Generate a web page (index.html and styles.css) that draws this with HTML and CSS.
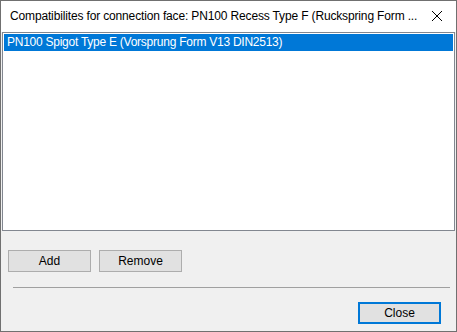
FILE: index.html
```html
<!DOCTYPE html>
<html lang="en">

<head>
  <meta charset="UTF-8" />
  <title>Compatibilites</title>
  <link rel="stylesheet" href="styles.css">
</head>

<body>
  <div class="window">
    <div class="titlebar">
      <span class="title">Compatibilites for connection face: PN100 Recess Type F (Ruckspring Form ...</span>
      <svg class="close-x" width="12" height="12" viewBox="0 0 12 12">
        <path d="M1 1 L11 11 M11 1 L1 11" stroke="#000" stroke-width="1" fill="none" />
      </svg>
    </div>

    <div class="content">
      <div class="listbox">
        <div class="list-item selected">PN100 Spigot Type E (Vorsprung Form V13 DIN2513)</div>
      </div>

      <div class="button-row">
        <button class="btn">Add</button>
        <button class="btn">Remove</button>
      </div>

      <div class="separator"></div>

      <div class="footer">
        <button class="btn default">Close</button>
      </div>
    </div>
  </div>
</body>

</html>
```

FILE: styles.css
```css
body {
  margin: 0;
  font-family: 'Liberation Sans', Arial, sans-serif;
  font-size: 12px;
  color: #000;
  background: #f0f0f0;
}

.window {
  width: 457px;
  height: 332px;
  box-sizing: border-box;
  border: 1px solid #707070;
  background: #f0f0f0;
  display: flex;
  flex-direction: column;
}

.titlebar {
  height: 31px;
  background: #fff;
  display: flex;
  align-items: center;
  padding-left: 9px;
  padding-right: 13px;
}

.title {
  flex: 1;
  white-space: nowrap;
  overflow: hidden;
  letter-spacing: -0.15px;
  padding-bottom: 1px;
}

.close-x {
  display: block;
  margin-bottom: 1px;
}

.content {
  flex: 1;
  padding: 0 1px;
}

.listbox {
  height: 199px;
  box-sizing: border-box;
  border: 1px solid #828790;
  background: #fff;
  padding: 1px;
}

.list-item {
  height: 17px;
  line-height: 16px;
  padding-left: 3px;
  white-space: nowrap;
  letter-spacing: -0.25px;
}

.list-item.selected {
  background: #0078d7;
  color: #fff;
}

.button-row {
  display: flex;
  gap: 8px;
  margin-top: 19px;
  padding-left: 6px;
}

.btn {
  width: 83px;
  height: 22px;
  box-sizing: border-box;
  border: 1px solid #adadad;
  background: #e1e1e1;
  font-family: inherit;
  font-size: 12px;
  color: #000;
  padding: 0;
  margin: 0;
}

.btn.default {
  border: 2px solid #0078d7;
}

.separator {
  margin: 15px 5px 0 11px;
  height: 1px;
  background: #a0a0a0;
}

.footer {
  display: flex;
  justify-content: flex-end;
  margin-top: 14px;
  padding-right: 14px;
}
```
